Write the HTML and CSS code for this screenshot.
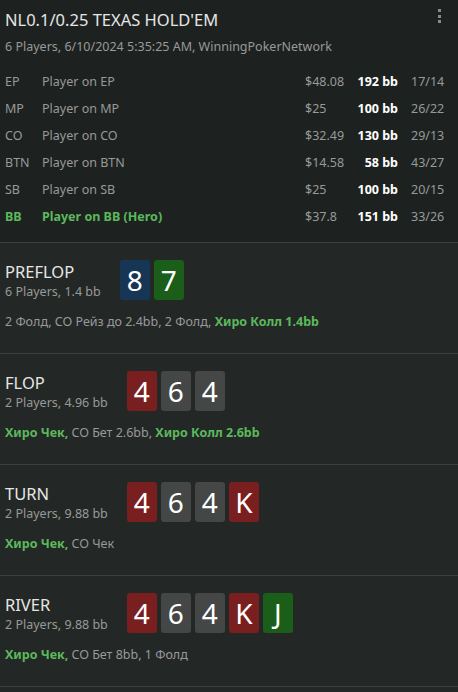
FILE: index.html
```html
<!DOCTYPE html>
<html lang="ru">
<head>
  <meta charset="UTF-8" />
  <meta name="viewport" content="width=device-width, initial-scale=1.0"/>
  <title>Hand History</title>
  <link rel="stylesheet" href="styles.css">
</head>
<body>

  <!-- Hand header -->
  <header class="hand">
    <div class="hand-top">
      <h1 class="hand-title">NL0.1/0.25 TEXAS HOLD'EM</h1>
      <span class="menu" title="Menu"><i></i><i></i><i></i></span>
    </div>
    <p class="hand-info">6 Players, 6/10/2024 5:35:25 AM, WinningPokerNetwork</p>

    <div class="seats">
      <div class="seat"><span class="pos">EP</span><span class="name">Player on EP</span><span class="stack">$48.08</span><span class="bb">192 bb</span><span class="ratio">17/14</span></div>
      <div class="seat"><span class="pos">MP</span><span class="name">Player on MP</span><span class="stack">$25</span><span class="bb">100 bb</span><span class="ratio">26/22</span></div>
      <div class="seat"><span class="pos">CO</span><span class="name">Player on CO</span><span class="stack">$32.49</span><span class="bb">130 bb</span><span class="ratio">29/13</span></div>
      <div class="seat"><span class="pos">BTN</span><span class="name">Player on BTN</span><span class="stack">$14.58</span><span class="bb">58 bb</span><span class="ratio">43/27</span></div>
      <div class="seat"><span class="pos">SB</span><span class="name">Player on SB</span><span class="stack">$25</span><span class="bb">100 bb</span><span class="ratio">20/15</span></div>
      <div class="seat hero"><span class="pos">BB</span><span class="name">Player on BB (Hero)</span><span class="stack">$37.8</span><span class="bb">151 bb</span><span class="ratio">33/26</span></div>
    </div>
  </header>

  <!-- Streets -->
  <section class="street">
    <div class="street-head">
      <div class="street-label">
        <h2>PREFLOP</h2>
        <p>6 Players, 1.4 bb</p>
      </div>
      <div class="cards">
        <span class="card blue">8</span>
        <span class="card green">7</span>
      </div>
    </div>
    <p class="actions">2 Фолд, CO Рейз до 2.4bb, 2 Фолд, <b>Хиро Колл 1.4bb</b></p>
  </section>

  <section class="street">
    <div class="street-head">
      <div class="street-label">
        <h2>FLOP</h2>
        <p>2 Players, 4.96 bb</p>
      </div>
      <div class="cards">
        <span class="card red">4</span>
        <span class="card gray">6</span>
        <span class="card gray">4</span>
      </div>
    </div>
    <p class="actions"><b>Хиро Чек,</b> CO Бет 2.6bb, <b>Хиро Колл 2.6bb</b></p>
  </section>

  <section class="street">
    <div class="street-head">
      <div class="street-label">
        <h2>TURN</h2>
        <p>2 Players, 9.88 bb</p>
      </div>
      <div class="cards">
        <span class="card red">4</span>
        <span class="card gray">6</span>
        <span class="card gray">4</span>
        <span class="card red">K</span>
      </div>
    </div>
    <p class="actions"><b>Хиро Чек,</b> CO Чек</p>
  </section>

  <section class="street">
    <div class="street-head">
      <div class="street-label">
        <h2>RIVER</h2>
        <p>2 Players, 9.88 bb</p>
      </div>
      <div class="cards">
        <span class="card red">4</span>
        <span class="card gray">6</span>
        <span class="card gray">4</span>
        <span class="card red">K</span>
        <span class="card green">J</span>
      </div>
    </div>
    <p class="actions"><b>Хиро Чек,</b> CO Бет 8bb, 1 Фолд</p>
  </section>

</body>
</html>
```

FILE: styles.css
```css
* { box-sizing: border-box; margin: 0; padding: 0; font-family: "Noto Sans", "Open Sans", sans-serif; }
body { background: #232826; color: #999; font-size: 12.5px; line-height: 18px; }

/* Header with seats */
.hand { background: #1d2220; padding: 8px 0 12px 5px; border-bottom: 1px solid #3c413f; }
.hand-top { display: flex; justify-content: space-between; align-items: flex-start; }
.hand-title { font-size: 16.5px; font-weight: normal; color: #e6e6e6; line-height: 24px; }
.menu { display: flex; flex-direction: column; gap: 2.5px; padding: 1px 17px 0 0; }
.menu i { display: block; width: 3px; height: 3px; background: #8a8a8a; }
.hand-info { margin-top: 6px; }

.seats { margin-top: 12px; }
.seat { display: grid; grid-template-columns: 37px 1fr 47px 46px 60px; height: 27px; align-items: center; white-space: nowrap; }
.seat .bb { color: #fff; font-weight: bold; text-align: right; }
.seat .ratio { padding-left: 13px; }
.seat.hero .pos, .seat.hero .name { color: #5cb85c; font-weight: bold; }

/* Street blocks */
.street { padding: 17px 5px 22px; border-bottom: 1px solid #3c413f; }
.street-head { display: flex; align-items: center; gap: 19px; }
.street-label h2 { font-size: 16.5px; font-weight: normal; color: #e6e6e6; line-height: 22px; }
.street-label p { line-height: 17px; }
.cards { display: flex; gap: 4px; }
.card { width: 30px; height: 40px; border-radius: 3px; color: #fff; font-size: 28px; line-height: 40px; text-align: center; }
.card.blue { background: #173655; }
.card.green { background: #1a5e1a; }
.card.red { background: #7a1f1f; }
.card.gray { background: #444746; }
.actions { margin-top: 13px; }
.actions b { color: #5cb85c; }
```
